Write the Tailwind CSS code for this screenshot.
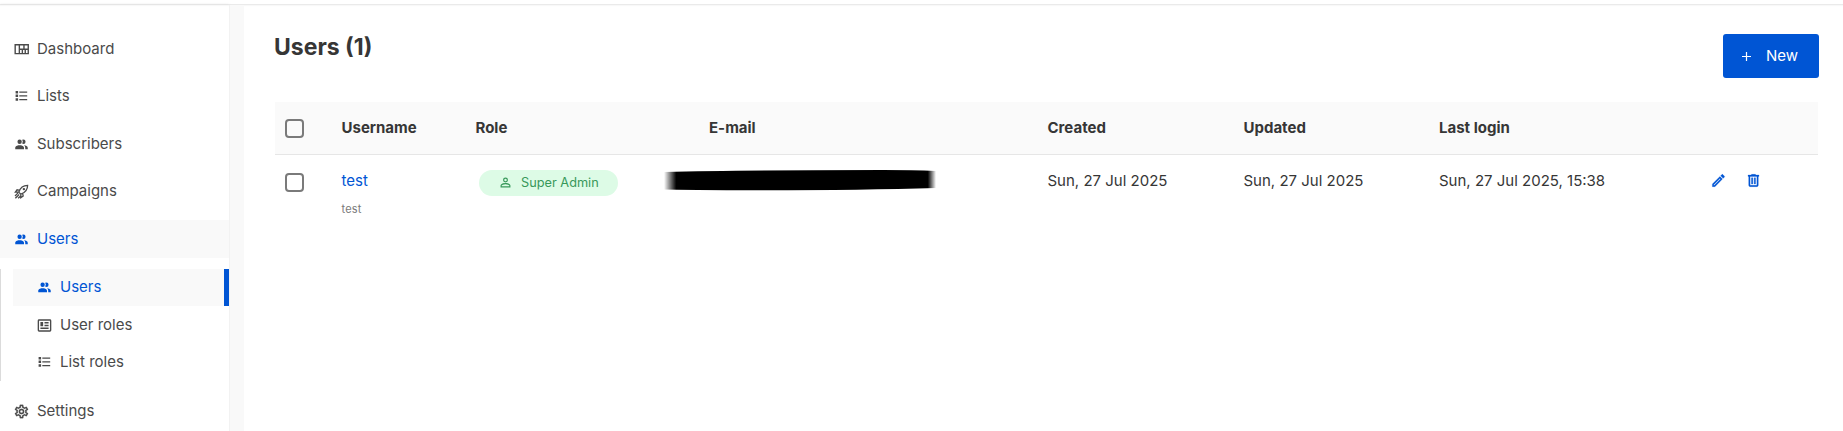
<!DOCTYPE html>
<html lang="en">
<head>
<meta charset="utf-8">
<title>Users</title>
<script src="https://cdn.jsdelivr.net/npm/@tailwindcss/browser@4"></script>
</head>
<body class="w-[1843px] h-[431px] overflow-hidden bg-white text-[15px] leading-6 text-[#363636] font-['Inter','Liberation_Sans',sans-serif]">
<svg class="hidden">
  <symbol id="dash" viewBox="0 0 14 14"><path fill="none" stroke="currentColor" stroke-width="1.3" d="M1.100 2.600h12.200v8.200H1.100zM5 2.600v8.200M9.300 2.600v4.100M7.800 6.700v4.100M5 6.700h8.300M10.500 6.700v4.100"/></symbol>
  <symbol id="list" viewBox="0 0 14 14"><path fill="currentColor" d="M1.600 1.900h2.500v2.500H1.600zM1.600 5.600h2.500v2.500H1.600zM1.600 9.300h2.500v2.500H1.600zM5.300 2.500h7.900v1.300H5.300zM5.300 6.200h7.900v1.300H5.300zM5.300 9.900h7.900v1.300H5.300z"/></symbol>
  <symbol id="people" viewBox="1 0 22 24"><path fill="currentColor" d="M16 17v2.500H2V17s0-4 7-4 7 4 7 4m-3.500-9.500A3.500 3.500 0 1 0 9 11a3.500 3.500 0 0 0 3.500-3.500m3.440 5.500A5.320 5.320 0 0 1 18 17v2.500h4V17s0-3.630-6.060-4M15 4a3.390 3.390 0 0 0-1.930.59 5 5 0 0 1 0 5.820A3.390 3.390 0 0 0 15 11a3.500 3.500 0 0 0 0-7"/></symbol>
  <symbol id="rocket" viewBox="1 1 22 22"><g fill="none" stroke="currentColor" stroke-width="1.900"><path d="M8 13C10 7 14 3 21 3c0 7-4 11-10 13zM9.500 10.500 5.500 9.500 3 13l5 0M13.500 14.500l1 4L11 21v-5M7 14l-4.500 4.500M8.500 16.500 3 22M10.500 19 7 22"/></g><circle cx="15.500" cy="8.500" r="1.800" fill="currentColor"/></symbol>
  <symbol id="roles" viewBox="1 1 22 22"><path fill="currentColor" d="M20 5v14H4V5h16m0-2H4a2 2 0 0 0-2 2v14a2 2 0 0 0 2 2h16a2 2 0 0 0 2-2V5a2 2 0 0 0-2-2m-2 12H6v2h12v-2m-8-8H6v6h4V7m2 2h6V7h-6v2m6 2h-6v2h6v-2z"/></symbol>
  <symbol id="cog" viewBox="1 1 22 22"><path fill="currentColor" stroke="currentColor" stroke-width=".3" d="M12 8a4 4 0 0 1 4 4 4 4 0 0 1-4 4 4 4 0 0 1-4-4 4 4 0 0 1 4-4m0 2a2 2 0 0 0-2 2 2 2 0 0 0 2 2 2 2 0 0 0 2-2 2 2 0 0 0-2-2m-2 12c-.25 0-.46-.18-.5-.42l-.37-2.650c-.63-.25-1.170-.59-1.690-.99l-2.490 1.010c-.22.080-.49 0-.61-.220l-2-3.460c-.13-.220-.070-.490.120-.640l2.110-1.660L4.500 12l.070-1-2.110-1.630c-.190-.150-.250-.420-.120-.640l2-3.460c.120-.220.390-.310.610-.220l2.490 1c.520-.390 1.060-.730 1.690-.980l.370-2.650c.040-.240.250-.420.500-.420h4c.250 0 .460.180.500.420l.370 2.650c.630.250 1.170.590 1.690.980l2.490-1c.220-.090.490 0 .610.220l2 3.460c.130.220.070.490-.120.640L19.430 11l.070 1-.070 1 2.110 1.630c.190.150.250.420.120.640l-2 3.460c-.120.220-.390.310-.610.220l-2.490-1c-.520.390-1.060.730-1.690.980l-.370 2.650c-.040.240-.250.420-.500.420h-4m1.250-18-.370 2.610c-1.200.250-2.260.890-3.030 1.780L5.440 7.350l-.750 1.300L6.800 10.200a5.550 5.550 0 0 0 0 3.600l-2.120 1.560.750 1.300 2.430-1.040c.770.880 1.820 1.520 3.010 1.760l.370 2.620h1.520l.370-2.610c1.190-.250 2.240-.890 3.010-1.770l2.430 1.040.750-1.300-2.120-1.550c.400-1.170.400-2.440 0-3.610l2.110-1.550-.750-1.300-2.410 1.040a5.420 5.420 0 0 0-3.030-1.770L12.750 4h-1.500z"/></symbol>
  <symbol id="user" viewBox="1.500 1.500 21 21"><path fill="currentColor" d="M12 4a4 4 0 1 1 0 8 4 4 0 0 1 0-8m0 2a2 2 0 1 0 0 4 2 2 0 0 0 0-4m0 7c2.670 0 8 1.330 8 4v3H4v-3c0-2.670 5.330-4 8-4m0 1.900c-2.970 0-6.100 1.460-6.100 2.100v1.100h12.200V17c0-.640-3.130-2.100-6.100-2.100z"/></symbol>
  <symbol id="pencil" viewBox="1 1 22 22"><path fill="currentColor" stroke="currentColor" stroke-width=".4" d="m14.060 9 .940.940L5.920 19H5v-.920L14.060 9m3.600-6c-.250 0-.510.100-.700.290l-1.830 1.830 3.750 3.750 1.830-1.830c.390-.390.390-1.040 0-1.410l-2.340-2.340c-.200-.200-.450-.290-.710-.290m-3.600 3.190L3 17.250V21h3.750L17.810 9.940l-3.750-3.750z"/></symbol>
  <symbol id="trash" viewBox="1 1 22 22"><path fill="currentColor" stroke="currentColor" stroke-width=".4" d="M9 3v1H4v2h1v13a2 2 0 0 0 2 2h10a2 2 0 0 0 2-2V6h1V4h-5V3H9M7 6h10v13H7V6m2 2v9h2V8H9m4 0v9h2V8h-2z"/></symbol>
</svg>
<div class="h-[5px] border-b border-[#eaeaea] shadow-[0_1px_1px_#f8f8f8]"></div>
<div class="flex h-[426px]">
  <aside class="w-[229px] shrink-0 pt-[25px] text-[#4a4a4a] shadow-[0_0_3px_#ddd]">
    <nav class="flex flex-col">
      <a class="flex h-[38px] mb-[9px] items-center gap-2 pl-[14px]"><svg class="size-[15px]"><use href="#dash"/></svg>Dashboard</a>
      <a class="flex h-[38px] mb-[10px] items-center gap-2 pl-[14px]"><svg class="size-[14px] mr-[1px]"><use href="#list"/></svg>Lists</a>
      <a class="flex h-[38px] mb-[9px] items-center gap-2 pl-[14px]"><svg class="size-[15px]"><use href="#people"/></svg>Subscribers</a>
      <a class="flex h-[38px] mb-[10px] items-center gap-2 pl-[14px]"><svg class="size-[15px]"><use href="#rocket"/></svg>Campaigns</a>
      <a class="flex h-[38px] mb-[11px] items-center gap-2 pl-[14px] bg-[#f9f9f9] text-[#0055d4]"><svg class="size-[15px]"><use href="#people"/></svg>Users</a>
      <div class="h-[112px] border-l border-[#dbdbdb] pl-3">
        <a class="flex h-[37px] items-center gap-2 pl-6 pb-px bg-[#f9f9f9] text-[#0055d4] border-r-[5px] border-[#0055d4]"><svg class="size-[15px]"><use href="#people"/></svg>Users</a>
        <a class="flex h-[38px] items-center gap-2 pl-6"><svg class="size-[15px]"><use href="#roles"/></svg>User roles</a>
        <a class="flex h-[37px] items-center gap-2 pl-6 pb-px"><svg class="size-[14px] mr-[1px]"><use href="#list"/></svg>List roles</a>
      </div>
      <a class="flex h-[38px] mt-[11px] items-center gap-2 pl-[14px]"><svg class="size-[15px]"><use href="#cog"/></svg>Settings</a>
    </nav>
  </aside>
  <div class="w-[15px] shrink-0 bg-[#f9f9f9] border-l border-[#f2f2f2]"></div>
  <main class="flex-1 pl-[30.5px]">
    <header class="flex justify-between pr-6 pt-[29px] h-[97px]">
      <h1 class="text-[23px] font-bold leading-[26px] -ml-[.5px]">Users (1)</h1>
      <button class="flex items-center w-24 h-11 rounded-[3px] bg-[#0055d4] text-white pl-[19px] gap-[15px]"><svg class="size-[9px]" viewBox="0 0 9 9"><path stroke="currentColor" stroke-width="1.200" d="M0 4.500h9M4.500 0v9"/></svg>New</button>
    </header>
    <table class="w-[1543.5px] table-fixed text-left">
      <colgroup><col class="w-[57px]"><col class="w-[134px]"><col class="w-[191px]"><col class="w-[382px]"><col class="w-[196px]"><col class="w-[195px]"><col class="w-[264px]"><col></colgroup>
      <thead>
        <tr class="h-[52px] bg-[#fafafa] border-b border-[#e6e6e6] font-bold">
          <th class="pl-[10px]"><span class="block size-[19px] mt-[2px] rounded-[4px] border-2 border-[#7a7a7a]"></span></th>
          <th class="pl-[10px]">Username</th><th class="pl-[10px]">Role</th><th class="pl-[52.5px]">E-mail</th><th class="pl-[9px]">Created</th><th class="pl-[9px]">Updated</th><th class="pl-[9.5px]">Last login</th><th></th>
        </tr>
      </thead>
      <tbody>
        <tr class="align-top">
          <td class="pl-[10px] pt-[18px]"><span class="block size-[19px] rounded-[4px] border-2 border-[#7a7a7a]"></span></td>
          <td class="pl-[10px] pt-[14px]"><a class="block text-[#0055d4]">test</a><span class="block mt-1 text-[11px] leading-6 text-[#7a7a7a] tracking-[.2px]">test</span></td>
          <td class="pl-[13.5px] pt-[15px]"><span class="flex items-center w-[139px] h-[26px] rounded-full bg-[#ddfbe6] text-[#38985a] text-[12.750px] pl-5 gap-[9px]"><svg class="size-[13px]"><use href="#user"/></svg>Super Admin</span></td>
          <td class="pl-[6.5px] pt-[14px]"><svg class="block w-[275px] h-6" viewBox="0 0 275 24"><defs><linearGradient id="ink"><stop offset="0" stop-opacity="0"/><stop offset=".045"/><stop offset=".97"/><stop offset="1" stop-opacity="0"/></linearGradient></defs><path fill="url(#ink)" d="M1 3Q60 1.300 150 1.200L220 1Q250 1 273 2V19Q200 21.200 100 21.300Q20 21 1 20.500z"/></svg></td>
          <td class="pl-[9px] pt-[14px]">Sun, 27 Jul 2025</td><td class="pl-[9px] pt-[14px]">Sun, 27 Jul 2025</td><td class="pl-[9.5px] pt-[14px]">Sun, 27 Jul 2025, 15:38</td>
          <td class="pl-[17.5px] pt-[18px]"><div class="flex gap-5 text-[#0055d4]"><svg class="size-[15px]"><use href="#pencil"/></svg><svg class="size-[15px]"><use href="#trash"/></svg></div></td>
        </tr>
      </tbody>
    </table>
  </main>
</div>
</body>
</html>
